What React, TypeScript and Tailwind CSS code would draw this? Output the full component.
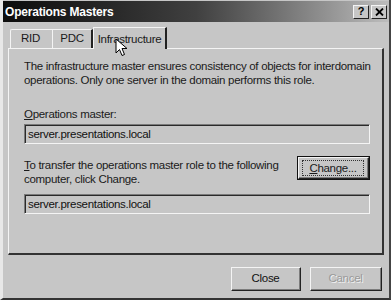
import React from "react";

const font = { fontFamily: '"Liberation Sans", Arial, sans-serif' };

function Btn({ children, disabled, focused, w }: { children: React.ReactNode; disabled?: boolean; focused?: boolean; w: string }) {
  return (
    <div className={`${w} h-[24px] ${focused ? "border border-[#111]" : ""}`}>
      <div className="w-full h-full border-t border-l border-[#f4f4f4] border-r border-b border-r-[#222] border-b-[#222] flex items-center justify-center">
        <div className="w-full h-full border-r border-b border-[#7c7c7c] flex items-center justify-center">
          {focused ? (
            <span className="border border-dotted border-[#333] px-[6px] leading-[14px]">{children}</span>
          ) : (
            <span className={disabled ? "text-[#9a9a9a]" : "text-[#111]"} style={disabled ? { textShadow: "1px 1px 0 #f0f0f0" } : undefined}>{children}</span>
          )}
        </div>
      </div>
    </div>
  );
}

function Field({ text }: { text: string }) {
  return (
    <div className="h-[20px] border-t border-l border-[#7a7a7a] border-r border-b border-r-[#f4f4f4] border-b-[#f4f4f4]">
      <div className="h-full border-t border-l border-[#2a2a2a] flex items-center pl-[2px] text-[#111]">{text}</div>
    </div>
  );
}

export default function App() {
  return (
    <div className="w-[391px] h-[300px] bg-[#c6c6c6] text-[11.5px] tracking-[-0.3px] text-[#1a1a1a] flex flex-col border-l-[3px] border-l-[#e8e8e8] border-b-[2px] border-b-[#333] border-r-[2px] border-r-[#444] overflow-hidden" style={font}>
      <div className="h-[21px] mt-[1px] flex items-center justify-between pl-[2px] pr-[2px] bg-gradient-to-r from-[#0d0d0d] via-[#404040] via-50% to-[#bdbdbd]">
        <span className="text-white font-bold text-[12px] tracking-[-0.2px]">Operations Masters</span>
        <div className="flex gap-[2px]">
          <div className="w-[16px] h-[14px] bg-[#c6c6c6] border-t border-l border-[#f4f4f4] border-r border-b border-r-[#222] border-b-[#222] flex items-center justify-center text-[11px] font-bold leading-none text-black">?</div>
          <div className="w-[16px] h-[14px] bg-[#c6c6c6] border-t border-l border-[#f4f4f4] border-r border-b border-r-[#222] border-b-[#222] flex items-center justify-center">
            <svg width="9" height="8" viewBox="0 0 9 8"><path d="M1 0.5 L8 7.5 M8 0.5 L1 7.5" stroke="#000" strokeWidth="1.8" /></svg>
          </div>
        </div>
      </div>

      <div className="flex flex-col px-[5px] pt-[4px] flex-1">
        <div className="flex items-end h-[22px] pl-[2px]">
          <div className="h-[19px] w-[42px] border-t border-l border-[#f4f4f4] rounded-tl-[2px] flex items-center justify-center pr-[2px]">RID</div>
          <div className="h-[19px] w-[41px] border-t border-l border-[#f4f4f4] border-r-2 border-r-[#222] flex items-center justify-center">PDC</div>
          <div className="relative h-[22px] w-[74px] -mb-[1px] bg-[#c6c6c6] border-t border-l border-[#f4f4f4] border-r-2 border-r-[#222] flex items-start justify-center pt-[3px] z-10">
            Infrastructure
            <svg className="absolute left-[21px] top-[10px]" width="14" height="20" viewBox="0 0 14 20">
              <path d="M1 1 L1 15 L4.5 11.5 L7 17.5 L9.5 16.5 L7 10.5 L12 10.5 Z" fill="#fff" stroke="#000" strokeWidth="1" strokeLinejoin="miter" />
            </svg>
          </div>
        </div>
        <div className="h-[207px] border-t border-l border-[#f4f4f4] border-r-2 border-b-2 border-r-[#333] border-b-[#333] pl-[15px] pr-[12px] pt-[10px] flex flex-col">
          <div className="leading-[14px] whitespace-nowrap">
            The infrastructure master ensures consistency of objects for interdomain<br />operations. Only one server in the domain performs this role.
          </div>
          <div className="mt-[20px] leading-[14px]"><span className="underline">O</span>perations master:</div>
          <div className="mt-[3px]"><Field text="server.presentations.local" /></div>
          <div className="mt-[14px] flex items-start justify-between">
            <div className="leading-[14px] whitespace-nowrap"><span className="underline">T</span>o transfer the operations master role to the following<br />computer, click Change.</div>
            <div className="mt-[-2px]"><Btn w="w-[73px]" focused><span className="underline">C</span>hange...</Btn></div>
          </div>
          <div className="mt-[8px]"><Field text="server.presentations.local" /></div>
        </div>
        <div className="flex justify-end gap-[9px] mt-[12px] pr-[2px]">
          <Btn w="w-[70px]">Close</Btn>
          <Btn w="w-[72px]" disabled>Cancel</Btn>
        </div>
      </div>
    </div>
  );
}
